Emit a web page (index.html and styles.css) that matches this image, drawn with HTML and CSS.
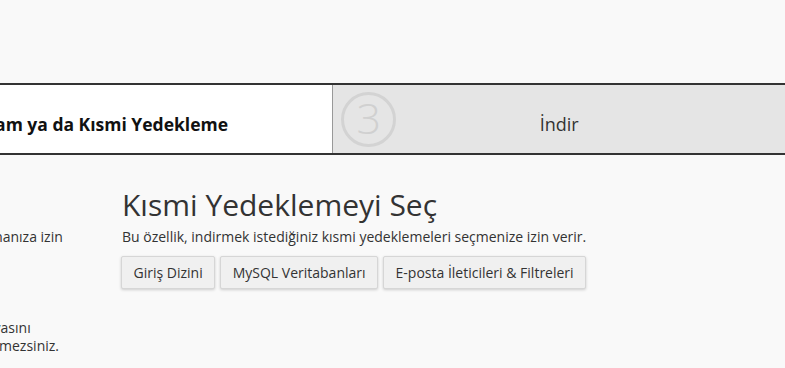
FILE: index.html
```html
<!DOCTYPE html>
<html lang="tr">
<head>
    <meta charset="UTF-8">
    <meta name="viewport" content="width=device-width, initial-scale=1.0">
    <title>Yedekleme Sihirbazı</title>
    <link rel="stylesheet" href="styles.css">
</head>
<body>
    <div class="page">
        <!-- Wizard steps -->
        <div class="steps">
            <div class="step">
                <span class="step-num">1</span>
                <span class="step-label">Yedekle veya Geri Yükle</span>
            </div>
            <div class="step current">
                <span class="step-num">2</span>
                <span class="step-label">Tam ya da Kısmi Yedekleme</span>
            </div>
            <div class="step">
                <span class="step-num">3</span>
                <span class="step-label">İndir</span>
            </div>
        </div>

        <div class="columns">
            <div class="col">
                <h2>Tam Yedekleme</h2>
                <p class="lines">Tam yedekleme sitenizin dosyalarını ve yapılandırmasını içeren arşiv dosyası oluşturmanıza izin<br>verir.</p>
                <button class="btn">Tam Yedeklemeyi İndir</button>
                <p class="lines note">Bu dosyayı hesabınızı bir sunucuya taşımak için kullanabilirsiniz. Tam yedekleme dosyasını<br>hesap yöneticinizle iletişime geçmeden cPanel arayüzünü kullanarak onu geri yükleyemezsiniz.</p>
            </div>
            <div class="col">
                <h2>Kısmi Yedeklemeyi Seç</h2>
                <p>Bu özellik, indirmek istediğiniz kısmi yedeklemeleri seçmenize izin verir.</p>
                <div class="btn-row">
                    <button class="btn">Giriş Dizini</button>
                    <button class="btn">MySQL Veritabanları</button>
                    <button class="btn">E-posta İleticileri &amp; Filtreleri</button>
                </div>
            </div>
        </div>
    </div>
</body>
</html>
```

FILE: styles.css
```css
body {
    margin: 0;
    font-family: "Open Sans", "Noto Sans", sans-serif;
    font-size: 14px;
    color: #333;
    background: #f9f9f9;
    overflow: hidden;
}
.page {
    width: 1356px;
    margin-left: -571px;
    padding-top: 83px;
}
.steps {
    display: flex;
    border-top: 2px solid #333;
    border-bottom: 2px solid #333;
}
.step {
    flex: 1;
    display: grid;
    grid-template-columns: 62px 1fr 62px;
    align-items: center;
    height: 68px;
    background: #e5e5e5;
    border-left: 1px solid #999;
}
.step:first-child {
    border-left: none;
}
.step.current {
    background: #fff;
    border-left: none;
}
.step.current .step-label {
    font-weight: bold;
    font-size: 17.5px;
    color: #111;
}
.step-num {
    box-sizing: border-box;
    width: 55px;
    height: 55px;
    margin-left: 8px;
    margin-top: 1px;
    padding-bottom: 4px;
    border: 3px solid #d3d3d3;
    border-radius: 50%;
    display: flex;
    align-items: center;
    justify-content: center;
    font-size: 43px;
    font-weight: 300;
    line-height: 1;
    color: #d0d0d0;
}
.step-label {
    text-align: center;
    font-size: 18px;
    padding-top: 10px;
}
.columns {
    display: grid;
    grid-template-columns: 1fr 1fr;
    padding-top: 33px;
}
.col {
    padding: 0 15px;
}
h2 {
    margin: 0 0 7px;
    font-size: 30px;
    font-weight: normal;
    line-height: 33px;
    color: #333;
}
p {
    margin: 0 0 10px;
    line-height: 18px;
}
.lines {
    white-space: nowrap;
}
.note {
    margin-top: 12px;
}
.btn-row {
    display: flex;
    gap: 5px;
    margin-left: -1px;
}
.btn {
    height: 33px;
    padding: 0 11.5px;
    font-family: inherit;
    font-size: 14px;
    color: #333;
    background: #f0f0f0;
    border: 1px solid #d6d6d6;
    border-radius: 2px;
    box-shadow: 0 1px 3px rgba(0, 0, 0, 0.18);
}
```
